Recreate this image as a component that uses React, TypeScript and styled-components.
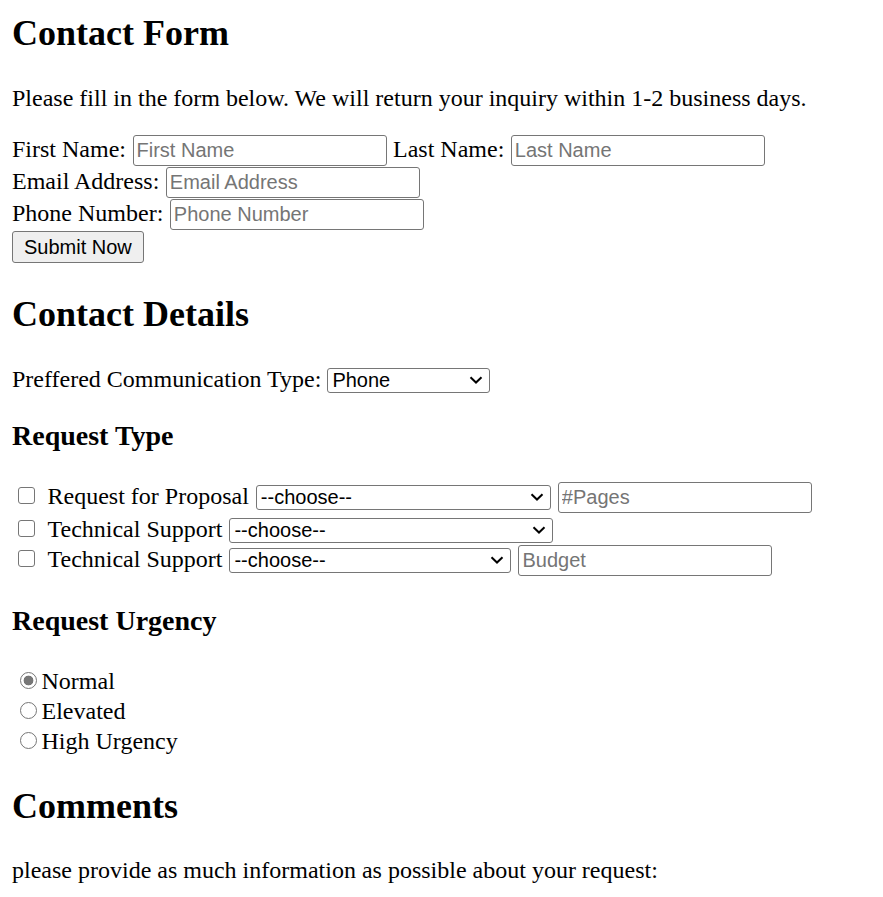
import React from "react";
import styled, { createGlobalStyle } from "styled-components";

const GlobalStyle = createGlobalStyle`
  html, body {
    margin: 0;
    background: #ffffff;
  }
  body {
    font-family: "Liberation Serif", "Times New Roman", serif;
    font-size: 24px;
    color: #000000;
  }
`;

const Page = styled.div`
  padding: 13px 12px 0;
`;

const Heading = styled.h1<{ $mt?: number }>`
  margin: ${({ $mt }) => $mt ?? 0}px 0 0;
  font-size: 36px;
  line-height: 40px;
  font-weight: bold;
`;

const SubHeading = styled.h3<{ $mt: number }>`
  margin: ${({ $mt }) => $mt}px 0 0;
  font-size: 28px;
  line-height: 32px;
  font-weight: bold;
`;

const Text = styled.p<{ $mt: number }>`
  margin: ${({ $mt }) => $mt}px 0 0;
  line-height: 28px;
`;

const Form = styled.form`
  margin-top: 23px;
`;

const FieldRow = styled.div`
  display: flex;
  align-items: baseline;
  gap: 6.5px;
  height: 32px;
`;

const Label = styled.span`
  line-height: 28px;
  white-space: nowrap;
`;

const TextInput = styled.input`
  box-sizing: border-box;
  flex-shrink: 0;
  width: 254px;
  height: 31px;
  margin: 0;
  padding: 3px;
  border: 1px solid #767676;
  border-radius: 3px;
  background: #ffffff;
  font-family: "Liberation Sans", Arial, sans-serif;
  font-size: 20px;
  color: #000000;
  outline: none;

  &::placeholder {
    color: #757575;
  }
`;

const SubmitButton = styled.button`
  box-sizing: border-box;
  display: block;
  height: 32px;
  margin: 0;
  padding: 0 11px;
  border: 1px solid #767676;
  border-radius: 3px;
  background: #efefef;
  font-family: "Liberation Sans", Arial, sans-serif;
  font-size: 20px;
  color: #000000;
`;

const PrefRow = styled.div`
  display: flex;
  align-items: baseline;
  gap: 6px;
  margin-top: 31px;
`;

const SelectBox = styled.span`
  position: relative;
  display: inline-flex;
  flex-shrink: 0;
`;

const Select = styled.select<{ $w: number }>`
  appearance: none;
  box-sizing: border-box;
  width: ${({ $w }) => $w}px;
  height: 25px;
  margin: 0;
  padding: 0 24px 0 4px;
  border: 1px solid #767676;
  border-radius: 3px;
  background: #ffffff;
  font-family: "Liberation Sans", Arial, sans-serif;
  font-size: 20px;
  color: #000000;
  outline: none;
`;

const Chevron = styled.svg`
  position: absolute;
  right: 7px;
  top: 50%;
  transform: translateY(-50%);
  pointer-events: none;
`;

const CheckList = styled.div`
  display: flex;
  flex-direction: column;
  gap: 2px;
  margin-top: 30px;
`;

const CheckRow = styled.div`
  display: flex;
  align-items: baseline;
  gap: 7px;
`;

const CheckBox = styled.input`
  appearance: none;
  box-sizing: border-box;
  flex-shrink: 0;
  width: 17px;
  height: 17px;
  margin: 0 6px 2px 5.5px;
  border: 1px solid #767676;
  border-radius: 3px;
  background: #ffffff;
`;

const RadioList = styled.div`
  margin-top: 29px;
`;

const RadioRow = styled.label`
  display: flex;
  align-items: baseline;
  line-height: 30px;
`;

const Radio = styled.input`
  appearance: none;
  box-sizing: border-box;
  flex-shrink: 0;
  width: 17px;
  height: 17px;
  margin: 0 4.5px 1px 8px;
  border: 1px solid #767676;
  border-radius: 50%;
  background: #ffffff;

  &:checked {
    background: radial-gradient(circle, #767676 0 4.6px, #ffffff 5.2px);
  }
`;

const ChoiceSelect = ({ width, children }: { width: number; children: React.ReactNode }) => (
  <SelectBox>
    <Select $w={width}>{children}</Select>
    <Chevron width="14" height="8" viewBox="0 0 14 8">
      <polyline points="1.5,1.2 7,6.5 12.5,1.2" fill="none" stroke="#000" strokeWidth="2" />
    </Chevron>
  </SelectBox>
);

const requestRows = [
  { label: "Request for Proposal", select: 295, input: "#Pages" },
  { label: "Technical Support", select: 324, input: "" },
  { label: "Technical Support", select: 282, input: "Budget" },
];

const urgencies = ["Normal", "Elevated", "High Urgency"];

export default function App() {
  return (
    <Page>
      <GlobalStyle />
      <Heading>Contact Form</Heading>
      <Text $mt={31}>Please fill in the form below. We will return your inquiry within 1-2 business days.</Text>

      <Form onSubmit={(e) => e.preventDefault()}>
        <FieldRow>
          <Label>First Name:</Label>
          <TextInput type="text" placeholder="First Name" />
          <Label>Last Name:</Label>
          <TextInput type="text" placeholder="Last Name" />
        </FieldRow>
        <FieldRow>
          <Label>Email Address:</Label>
          <TextInput type="text" placeholder="Email Address" />
        </FieldRow>
        <FieldRow>
          <Label>Phone Number:</Label>
          <TextInput type="text" placeholder="Phone Number" />
        </FieldRow>
        <SubmitButton type="submit">Submit Now</SubmitButton>
      </Form>

      <Heading as="h2" $mt={31}>Contact Details</Heading>
      <PrefRow>
        <Label>Preffered Communication Type:</Label>
        <ChoiceSelect width={163}>
          <option>Phone</option>
          <option>Email</option>
        </ChoiceSelect>
      </PrefRow>

      <SubHeading $mt={27}>Request Type</SubHeading>
      <CheckList>
        {requestRows.map((row, i) => (
          <CheckRow key={i}>
            <CheckBox type="checkbox" />
            <Label>{row.label}</Label>
            <ChoiceSelect width={row.select}>
              <option>--choose--</option>
            </ChoiceSelect>
            {row.input && <TextInput type="text" placeholder={row.input} />}
          </CheckRow>
        ))}
      </CheckList>

      <SubHeading $mt={28.5}>Request Urgency</SubHeading>
      <RadioList>
        {urgencies.map((u, i) => (
          <RadioRow key={u}>
            <Radio type="radio" name="urgency" defaultChecked={i === 0} />
            {u}
          </RadioRow>
        ))}
      </RadioList>

      <Heading as="h2" $mt={30.5}>Comments</Heading>
      <Text $mt={29.5}>please provide as much information as possible about your request:</Text>
    </Page>
  );
}
